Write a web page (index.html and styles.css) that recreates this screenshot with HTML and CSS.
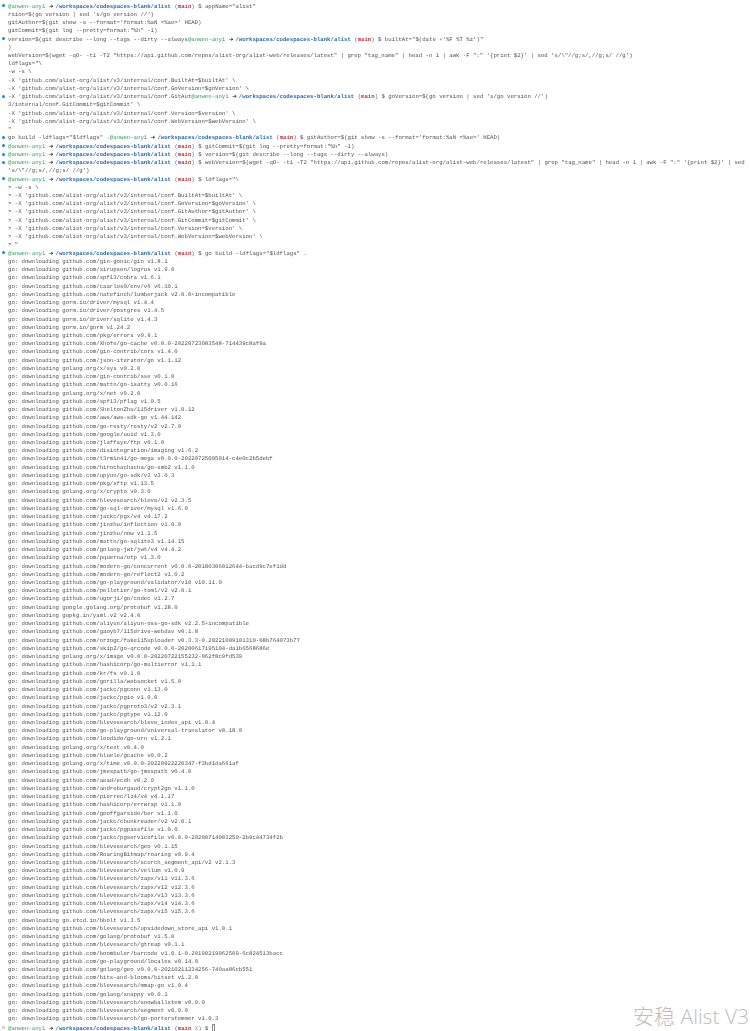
FILE: index.html
```html
<!DOCTYPE html>
<html lang="en">
<head>
<meta charset="utf-8">
<title>Terminal: go build alist</title>
<link rel="stylesheet" href="styles.css">
</head>
<body>
<main class="term">
<div class="line"><i class="dot"></i><span class="user">@anwen-any1</span> <b class="arrow">➜</b> <b class="path">/workspaces/codespaces-blank/alist</b> <span class="paren">(</span><span class="branch">main</span><span class="paren">)</span> $ appName="alist"</div>
<div class="line">rsion=$(go version | sed 's/go version //')</div>
<div class="line">gitAuthor=$(git show -s --format='format:%aN &lt;%ae&gt;' HEAD)</div>
<div class="line">gitCommit=$(git log --pretty=format:"%h" -1)</div>
<div class="line"><i class="dot"></i>version=$(git describe --long --tags --dirty --always<span class="user">@anwen-any1</span> <b class="arrow">➜</b> <b class="path">/workspaces/codespaces-blank/alist</b> <span class="paren">(</span><span class="branch">main</span><span class="paren">)</span> $ builtAt="$(date +'%F %T %z')"</div>
<div class="line">)</div>
<div class="line">webVersion=$(wget -qO- -t1 -T2 "https://api.github.com/repos/alist-org/alist-web/releases/latest" | grep "tag_name" | head -n 1 | awk -F ":" '{print $2}' | sed 's/\"//g;s/,//g;s/ //g')</div>
<div class="line">ldflags="\</div>
<div class="line">-w -s \</div>
<div class="line">-X 'github.com/alist-org/alist/v3/internal/conf.BuiltAt=$builtAt' \</div>
<div class="line">-X 'github.com/alist-org/alist/v3/internal/conf.GoVersion=$goVersion' \</div>
<div class="line"><i class="dot"></i>-X 'github.com/alist-org/alist/v3/internal/conf.GitAut<span class="user">@anwen-any1</span> <b class="arrow">➜</b> <b class="path">/workspaces/codespaces-blank/alist</b> <span class="paren">(</span><span class="branch">main</span><span class="paren">)</span> $ goVersion=$(go version | sed 's/go version //')</div>
<div class="line">3/internal/conf.GitCommit=$gitCommit' \</div>
<div class="line">-X 'github.com/alist-org/alist/v3/internal/conf.Version=$version' \</div>
<div class="line">-X 'github.com/alist-org/alist/v3/internal/conf.WebVersion=$webVersion' \</div>
<div class="line">"</div>
<div class="line"><i class="dot"></i>go build -ldflags="$ldflags" .<span class="user">@anwen-any1</span> <b class="arrow">➜</b> <b class="path">/workspaces/codespaces-blank/alist</b> <span class="paren">(</span><span class="branch">main</span><span class="paren">)</span> $ gitAuthor=$(git show -s --format='format:%aN &lt;%ae&gt;' HEAD)</div>
<div class="line"><i class="dot"></i><span class="user">@anwen-any1</span> <b class="arrow">➜</b> <b class="path">/workspaces/codespaces-blank/alist</b> <span class="paren">(</span><span class="branch">main</span><span class="paren">)</span> $ gitCommit=$(git log --pretty=format:"%h" -1)</div>
<div class="line"><i class="dot"></i><span class="user">@anwen-any1</span> <b class="arrow">➜</b> <b class="path">/workspaces/codespaces-blank/alist</b> <span class="paren">(</span><span class="branch">main</span><span class="paren">)</span> $ version=$(git describe --long --tags --dirty --always)</div>
<div class="line"><i class="dot"></i><span class="user">@anwen-any1</span> <b class="arrow">➜</b> <b class="path">/workspaces/codespaces-blank/alist</b> <span class="paren">(</span><span class="branch">main</span><span class="paren">)</span> $ webVersion=$(wget -qO- -t1 -T2 "https://api.github.com/repos/alist-org/alist-web/releases/latest" | grep "tag_name" | head -n 1 | awk -F ":" '{print $2}' | sed</div>
<div class="line">'s/\"//g;s/,//g;s/ //g')</div>
<div class="line"><i class="dot"></i><span class="user">@anwen-any1</span> <b class="arrow">➜</b> <b class="path">/workspaces/codespaces-blank/alist</b> <span class="paren">(</span><span class="branch">main</span><span class="paren">)</span> $ ldflags="\</div>
<div class="line">&gt; -w -s \</div>
<div class="line">&gt; -X 'github.com/alist-org/alist/v3/internal/conf.BuiltAt=$builtAt' \</div>
<div class="line">&gt; -X 'github.com/alist-org/alist/v3/internal/conf.GoVersion=$goVersion' \</div>
<div class="line">&gt; -X 'github.com/alist-org/alist/v3/internal/conf.GitAuthor=$gitAuthor' \</div>
<div class="line">&gt; -X 'github.com/alist-org/alist/v3/internal/conf.GitCommit=$gitCommit' \</div>
<div class="line">&gt; -X 'github.com/alist-org/alist/v3/internal/conf.Version=$version' \</div>
<div class="line">&gt; -X 'github.com/alist-org/alist/v3/internal/conf.WebVersion=$webVersion' \</div>
<div class="line">&gt; "</div>
<div class="line"><i class="dot"></i><span class="user">@anwen-any1</span> <b class="arrow">➜</b> <b class="path">/workspaces/codespaces-blank/alist</b> <span class="paren">(</span><span class="branch">main</span><span class="paren">)</span> $ go build -ldflags="$ldflags" .</div>
<div class="line">go: downloading github.com/gin-gonic/gin v1.8.1</div>
<div class="line">go: downloading github.com/sirupsen/logrus v1.9.0</div>
<div class="line">go: downloading github.com/spf13/cobra v1.6.1</div>
<div class="line">go: downloading github.com/caarlos0/env/v6 v6.10.1</div>
<div class="line">go: downloading github.com/natefinch/lumberjack v2.0.0+incompatible</div>
<div class="line">go: downloading gorm.io/driver/mysql v1.4.4</div>
<div class="line">go: downloading gorm.io/driver/postgres v1.4.5</div>
<div class="line">go: downloading gorm.io/driver/sqlite v1.4.3</div>
<div class="line">go: downloading gorm.io/gorm v1.24.2</div>
<div class="line">go: downloading github.com/pkg/errors v0.9.1</div>
<div class="line">go: downloading github.com/Xhofe/go-cache v0.0.0-20220723083548-714439c8af9a</div>
<div class="line">go: downloading github.com/gin-contrib/cors v1.4.0</div>
<div class="line">go: downloading github.com/json-iterator/go v1.1.12</div>
<div class="line">go: downloading golang.org/x/sys v0.2.0</div>
<div class="line">go: downloading github.com/gin-contrib/sse v0.1.0</div>
<div class="line">go: downloading github.com/mattn/go-isatty v0.0.16</div>
<div class="line">go: downloading golang.org/x/net v0.2.0</div>
<div class="line">go: downloading github.com/spf13/pflag v1.0.5</div>
<div class="line">go: downloading github.com/SheltonZhu/115driver v1.0.12</div>
<div class="line">go: downloading github.com/aws/aws-sdk-go v1.44.142</div>
<div class="line">go: downloading github.com/go-resty/resty/v2 v2.7.0</div>
<div class="line">go: downloading github.com/google/uuid v1.3.0</div>
<div class="line">go: downloading github.com/jlaffaye/ftp v0.1.0</div>
<div class="line">go: downloading github.com/disintegration/imaging v1.6.2</div>
<div class="line">go: downloading github.com/t3rmin41/go-mega v0.0.0-20220725095014-c4e0c2b5debf</div>
<div class="line">go: downloading github.com/hirochachacha/go-smb2 v1.1.0</div>
<div class="line">go: downloading github.com/upyun/go-sdk/v3 v3.0.3</div>
<div class="line">go: downloading github.com/pkg/sftp v1.13.5</div>
<div class="line">go: downloading golang.org/x/crypto v0.3.0</div>
<div class="line">go: downloading github.com/blevesearch/bleve/v2 v2.3.5</div>
<div class="line">go: downloading github.com/go-sql-driver/mysql v1.6.0</div>
<div class="line">go: downloading github.com/jackc/pgx/v4 v4.17.2</div>
<div class="line">go: downloading github.com/jinzhu/inflection v1.0.0</div>
<div class="line">go: downloading github.com/jinzhu/now v1.1.5</div>
<div class="line">go: downloading github.com/mattn/go-sqlite3 v1.14.15</div>
<div class="line">go: downloading github.com/golang-jwt/jwt/v4 v4.4.2</div>
<div class="line">go: downloading github.com/pquerna/otp v1.3.0</div>
<div class="line">go: downloading github.com/modern-go/concurrent v0.0.0-20180306012644-bacd9c7ef1dd</div>
<div class="line">go: downloading github.com/modern-go/reflect2 v1.0.2</div>
<div class="line">go: downloading github.com/go-playground/validator/v10 v10.11.0</div>
<div class="line">go: downloading github.com/pelletier/go-toml/v2 v2.0.1</div>
<div class="line">go: downloading github.com/ugorji/go/codec v1.2.7</div>
<div class="line">go: downloading google.golang.org/protobuf v1.28.0</div>
<div class="line">go: downloading gopkg.in/yaml.v2 v2.4.0</div>
<div class="line">go: downloading github.com/aliyun/aliyun-oss-go-sdk v2.2.5+incompatible</div>
<div class="line">go: downloading github.com/gaoyb7/115drive-webdav v0.1.8</div>
<div class="line">go: downloading github.com/orzogc/fake115uploader v0.3.3-0.20221009101310-08b764073b77</div>
<div class="line">go: downloading github.com/skip2/go-qrcode v0.0.0-20200617195104-da1b6568686e</div>
<div class="line">go: downloading golang.org/x/image v0.0.0-20220722155232-062f8c9fd539</div>
<div class="line">go: downloading github.com/hashicorp/go-multierror v1.1.1</div>
<div class="line">go: downloading github.com/kr/fs v0.1.0</div>
<div class="line">go: downloading github.com/gorilla/websocket v1.5.0</div>
<div class="line">go: downloading github.com/jackc/pgconn v1.13.0</div>
<div class="line">go: downloading github.com/jackc/pgio v1.0.0</div>
<div class="line">go: downloading github.com/jackc/pgproto3/v2 v2.3.1</div>
<div class="line">go: downloading github.com/jackc/pgtype v1.12.0</div>
<div class="line">go: downloading github.com/blevesearch/bleve_index_api v1.0.4</div>
<div class="line">go: downloading github.com/go-playground/universal-translator v0.18.0</div>
<div class="line">go: downloading github.com/leodido/go-urn v1.2.1</div>
<div class="line">go: downloading golang.org/x/text v0.4.0</div>
<div class="line">go: downloading github.com/bluele/gcache v0.0.2</div>
<div class="line">go: downloading golang.org/x/time v0.0.0-20220922220347-f3bd1da661af</div>
<div class="line">go: downloading github.com/jmespath/go-jmespath v0.4.0</div>
<div class="line">go: downloading github.com/aead/ecdh v0.2.0</div>
<div class="line">go: downloading github.com/andreburgaud/crypt2go v1.1.0</div>
<div class="line">go: downloading github.com/pierrec/lz4/v4 v4.1.17</div>
<div class="line">go: downloading github.com/hashicorp/errwrap v1.1.0</div>
<div class="line">go: downloading github.com/geoffgarside/ber v1.1.0</div>
<div class="line">go: downloading github.com/jackc/chunkreader/v2 v2.0.1</div>
<div class="line">go: downloading github.com/jackc/pgpassfile v1.0.0</div>
<div class="line">go: downloading github.com/jackc/pgservicefile v0.0.0-20200714003250-2b9c44734f2b</div>
<div class="line">go: downloading github.com/blevesearch/geo v0.1.15</div>
<div class="line">go: downloading github.com/RoaringBitmap/roaring v0.9.4</div>
<div class="line">go: downloading github.com/blevesearch/scorch_segment_api/v2 v2.1.3</div>
<div class="line">go: downloading github.com/blevesearch/vellum v1.0.9</div>
<div class="line">go: downloading github.com/blevesearch/zapx/v11 v11.3.6</div>
<div class="line">go: downloading github.com/blevesearch/zapx/v12 v12.3.6</div>
<div class="line">go: downloading github.com/blevesearch/zapx/v13 v13.3.6</div>
<div class="line">go: downloading github.com/blevesearch/zapx/v14 v14.3.6</div>
<div class="line">go: downloading github.com/blevesearch/zapx/v15 v15.3.6</div>
<div class="line">go: downloading go.etcd.io/bbolt v1.3.5</div>
<div class="line">go: downloading github.com/blevesearch/upsidedown_store_api v1.0.1</div>
<div class="line">go: downloading github.com/golang/protobuf v1.5.0</div>
<div class="line">go: downloading github.com/blevesearch/gtreap v0.1.1</div>
<div class="line">go: downloading github.com/boombuler/barcode v1.0.1-0.20190219062509-6c824513bacc</div>
<div class="line">go: downloading github.com/go-playground/locales v0.14.0</div>
<div class="line">go: downloading github.com/golang/geo v0.0.0-20210211234256-740aa86cb551</div>
<div class="line">go: downloading github.com/bits-and-blooms/bitset v1.2.0</div>
<div class="line">go: downloading github.com/blevesearch/mmap-go v1.0.4</div>
<div class="line">go: downloading github.com/golang/snappy v0.0.1</div>
<div class="line">go: downloading github.com/blevesearch/snowballstem v0.9.0</div>
<div class="line">go: downloading github.com/blevesearch/segment v0.9.0</div>
<div class="line">go: downloading github.com/blevesearch/go-porterstemmer v1.0.3</div>
<div class="line"><i class="dot dot-idle"></i><span class="user">@anwen-any1</span> <b class="arrow">➜</b> <b class="path">/workspaces/codespaces-blank/alist</b> <span class="paren">(</span><span class="branch">main</span> <span class="dirty">X</span><span class="paren">)</span> $ <i class="cursor"></i></div>
</main>
<div class="watermark">安稳 Alist V3</div>
</body>
</html>
```
FILE: styles.css
```css
html, body {
  margin: 0;
  height: 1031px;
  overflow: hidden;
  background: #fff;
}

.term {
  padding-top: 2.6px;
  font-family: "Liberation Mono", "DejaVu Sans Mono", monospace;
  font-size: 5.66px;
  line-height: 8.24px;
  color: #505050;
  text-rendering: geometricPrecision;
  filter: blur(0.3px);
}

.line {
  height: 8.24px;
  padding-left: 8px;
  white-space: pre;
}

.dot {
  display: inline-block;
  box-sizing: border-box;
  width: 3px;
  height: 3px;
  margin-left: -6.2px;
  margin-right: 3.2px;
  border-radius: 50%;
  background: #1a85e0;
  vertical-align: 0.2px;
}

.dot-idle {
  background: transparent;
  border: 0.6px solid #aaa;
}

.user { color: #2e9e5b; }

.arrow {
  display: inline-block;
  width: 3.4px;
  font-family: "DejaVu Sans", sans-serif;
  font-weight: 700;
  color: #222;
}

.path {
  font-weight: 700;
  color: #2a6bb5;
}

.paren { color: #2c6fbb; }
.branch { color: #c8323a; font-weight: 700; }
.dirty { color: #b59a20; }

.cursor {
  display: inline-block;
  box-sizing: border-box;
  width: 3.6px;
  height: 8px;
  border: 0.6px solid #888;
  vertical-align: -2px;
}

.watermark {
  position: absolute;
  right: 1px;
  bottom: 2px;
  font-family: "Open Sans", "Noto Sans CJK SC", sans-serif;
  font-size: 21px;
  font-weight: 300;
  line-height: 26px;
  color: #bdbdbd;
  white-space: nowrap;
}
```
